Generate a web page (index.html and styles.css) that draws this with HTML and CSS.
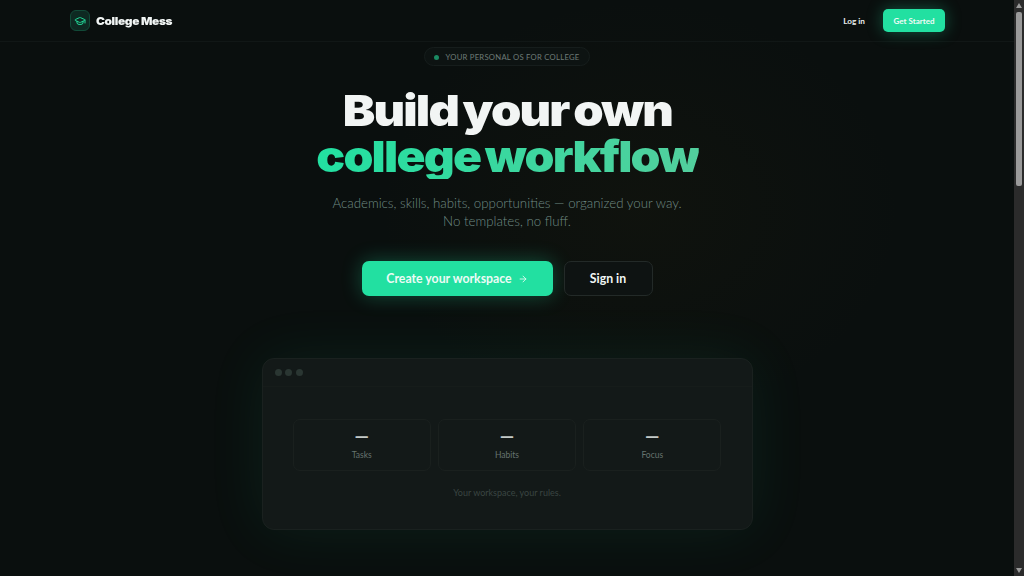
FILE: index.html
```html
<!DOCTYPE html>
<html lang="en">
<head>
<meta charset="utf-8">
<title>College Mess</title>
<link rel="stylesheet" href="styles.css">
</head>
<body>
<div class="app">
  <main class="page">
    <header class="nav">
      <div class="brand">
        <span class="logo">
          <svg viewBox="0 0 24 24" width="12" height="12" fill="none" stroke="currentColor" stroke-width="2" stroke-linecap="round" stroke-linejoin="round"><path d="M21.42 10.92a1 1 0 0 0-.02-1.84L12.83 5.18a2 2 0 0 0-1.66 0L2.6 9.08a1 1 0 0 0 0 1.83l8.57 3.91a2 2 0 0 0 1.66 0z"/><path d="M22 10v6"/><path d="M6 12.5V16a6 3 0 0 0 12 0v-3.5"/></svg>
        </span>
        <span class="brand-name">College Mess</span>
      </div>
      <nav class="nav-actions">
        <a class="login">Log in</a>
        <a class="cta-small">Get Started</a>
      </nav>
    </header>
    <section class="hero">
      <div class="badge"><i class="badge-dot"></i>YOUR PERSONAL OS FOR COLLEGE</div>
      <h1 class="title"><span class="line">Build your own</span><span class="accent">college workflow</span></h1>
      <p class="sub">Academics, skills, habits, opportunities — organized your way.<br>No templates, no fluff.</p>
      <div class="actions">
        <a class="btn primary">Create your workspace
          <svg viewBox="0 0 24 24" width="10" height="10" fill="none" stroke="currentColor" stroke-width="2" stroke-linecap="round" stroke-linejoin="round"><path d="M5 12h14"/><path d="m12 5 7 7-7 7"/></svg>
        </a>
        <a class="btn ghost">Sign in</a>
      </div>
      <div class="preview">
        <div class="preview-bar"><i></i><i></i><i></i></div>
        <div class="stats">
          <div class="stat"><b>—</b><span>Tasks</span></div>
          <div class="stat"><b>—</b><span>Habits</span></div>
          <div class="stat"><b>—</b><span>Focus</span></div>
        </div>
        <p class="note">Your workspace, your rules.</p>
      </div>
    </section>
  </main>
  <div class="scrollbar" aria-hidden="true">
    <span class="arrow up"></span>
    <span class="thumb"></span>
    <span class="arrow down"></span>
  </div>
</div>
</body>
</html>
```
FILE: styles.css
```css
* { box-sizing: border-box; margin: 0; padding: 0; }
html, body { height: 576px; overflow: hidden; background: #0a0f0e; }
body { font-family: "Lato", "Liberation Sans", sans-serif; color: #f1f5f4; }
a { display: inline-flex; align-items: center; }
.app { display: flex; height: 576px; }
.page {
  flex: 1; min-width: 0; overflow: hidden;
  background:
    radial-gradient(ellipse 260px 210px at 640px 210px, rgba(70,55,10,.09), transparent 100%),
    #0a0f0e;
}
.nav {
  height: 42px; padding: 0 69px 0 70px; display: flex; align-items: center; justify-content: space-between;
  border-bottom: 1px solid #111716;
}
.brand { display: flex; align-items: center; gap: 6px; }
.logo {
  width: 20px; height: 21px; border-radius: 6px; display: flex; align-items: center; justify-content: center;
  background: #0e2a22; border: 1px solid #124a38; color: #22d596;
}
.brand-name {
  font-family: "Inter", sans-serif; font-weight: 900; font-size: 11px; letter-spacing: -.35px; color: #f1f5f4;
  transform: scaleX(1.085); transform-origin: left center;
}
.nav-actions { display: flex; align-items: center; gap: 18px; }
.login { font-size: 8.2px; font-weight: 700; color: #e8eeec; }
.cta-small {
  height: 23px; width: 62px; justify-content: center; border-radius: 5px;
  background: #22e0a1; color: #f1fbf7; font-size: 8px; font-weight: 700;
  box-shadow: 0 0 16px rgba(34,224,161,.35);
}
.hero { display: flex; flex-direction: column; align-items: center; padding-top: 5px; }
.badge {
  height: 19px; width: 166px; border-radius: 10px; border: 1px solid #161d1c; background: #0d1312;
  display: flex; align-items: center; justify-content: center; gap: 6px;
  font-size: 7.7px; letter-spacing: .25px; color: #6d7b77; padding-top: 1px;
}
.badge-dot { width: 5px; height: 5px; border-radius: 50%; background: #1b8a63; }
.title {
  margin-top: 21px; display: flex; flex-direction: column; align-items: center;
  font-family: "Inter", sans-serif; font-weight: 900; font-size: 43px; line-height: 46px; letter-spacing: -1.6px; word-spacing: -3px;
  color: #f2f5f4;
}
.line { transform: scaleX(1.133); }
.accent {
  transform: scaleX(1.115);
  background: linear-gradient(90deg, #22e0a1, #52cf9d);
  -webkit-background-clip: text; background-clip: text; color: transparent;
}
.sub { margin-top: 15px; text-align: center; font-size: 13.3px; font-weight: 300; line-height: 18px; color: #6f8b84; }
.actions { margin-top: 31px; display: flex; gap: 11px; }
.btn { height: 35px; border-radius: 7px; justify-content: center; font-size: 12.3px; font-weight: 700; gap: 6px; }
.primary { width: 191px; background: #22e0a1; color: #ecfbf5; box-shadow: 0 0 20px rgba(34,224,161,.3); }
.ghost { width: 89px; border: 1px solid #232a28; color: #f1f5f4; background: #0e1312; }
.preview {
  margin-top: 62px; width: 491px; height: 172px; border-radius: 12px;
  background: #131918; border: 1px solid #1a211f;
  box-shadow: 0 0 60px rgba(34,224,161,.08);
  display: flex; flex-direction: column;
}
.preview-bar { height: 28px; padding: 0 12px; display: flex; align-items: center; gap: 3.5px; border-bottom: 1px solid #161c1a; }
.preview-bar i { width: 7px; height: 7px; border-radius: 50%; background: #2a3632; }
.stats { margin: 32px 30px 0; display: grid; grid-template-columns: repeat(3, 1fr); gap: 7px; }
.stat {
  height: 52px; border: 1px solid #1a201e; border-radius: 7px; display: flex; flex-direction: column; align-items: center; justify-content: flex-start;
}
.stat b { font-size: 18px; line-height: 17px; margin-top: 8px; font-weight: 900; color: #c4cac8; }
.stat span { font-size: 8.5px; line-height: 11px; margin-top: 5px; color: #66736f; }
.note { margin-top: 16px; text-align: center; font-size: 9px; color: #3a4542; }
.scrollbar { width: 10px; background: #2b2b2b; display: flex; flex-direction: column; align-items: center; padding-top: 3px; }
.arrow { width: 0; height: 0; border-left: 3px solid transparent; border-right: 3px solid transparent; border-bottom: 5px solid #9a9a9a; }
.thumb { width: 6px; height: 174px; margin-top: 4px; background: #9a9a9a; border-radius: 2px; }
.arrow.down { margin-top: auto; margin-bottom: 3px; border-bottom: 0; border-top: 5px solid #9a9a9a; }
```
